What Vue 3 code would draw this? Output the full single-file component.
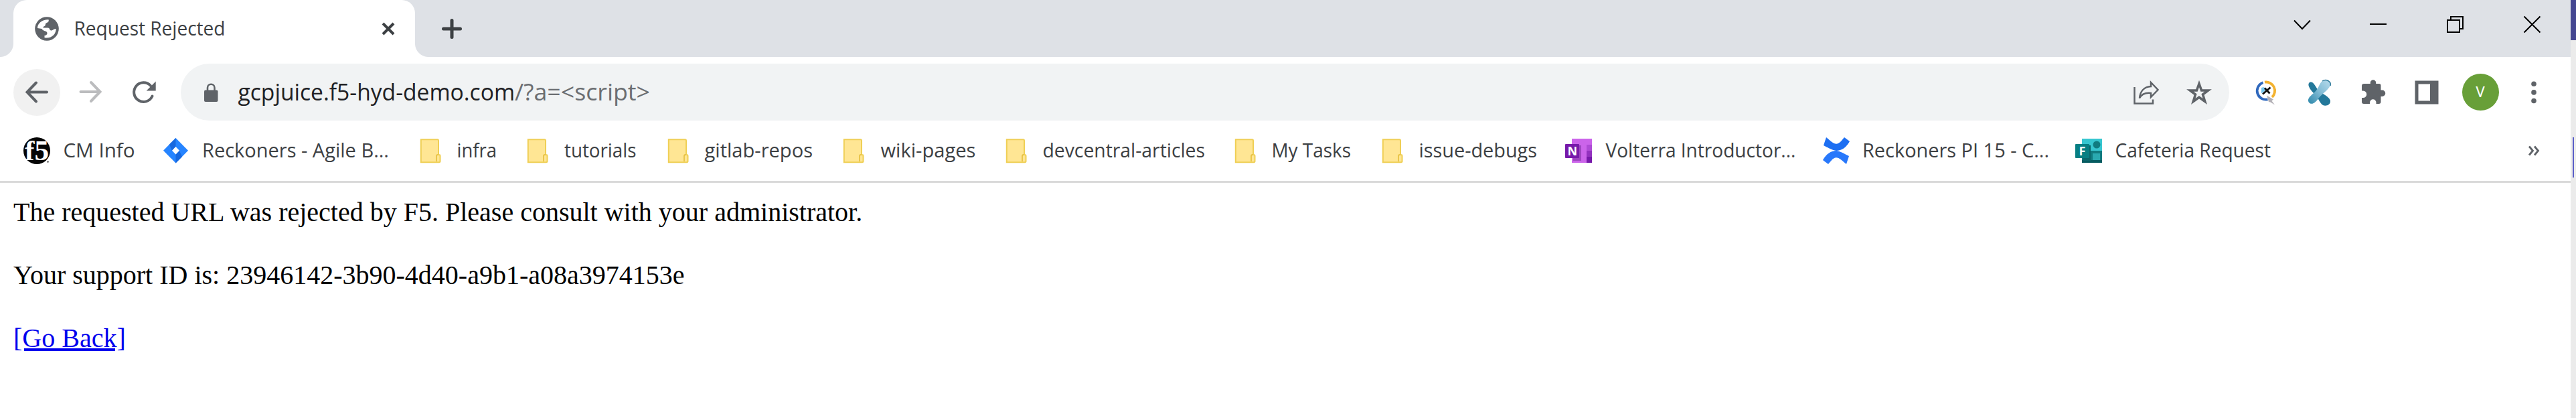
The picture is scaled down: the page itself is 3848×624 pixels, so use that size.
<script setup>
// x: text start inside the label, len: advance width of the text
const bookmarks = [
  { icon: 'f5', text: 'CM Info', width: 207, x: 59.5, len: 107 },
  { icon: 'jira', text: 'Reckoners - Agile B...', width: 381, x: 60, len: 279 },
  { icon: 'folder', text: 'infra', width: 160, x: 59.5, len: 59.5 },
  { icon: 'folder', text: 'tutorials', width: 210, x: 60, len: 107.5 },
  { icon: 'folder', text: 'gitlab-repos', width: 262, x: 59.5, len: 161.5 },
  { icon: 'folder', text: 'wiki-pages', width: 243, x: 60.5, len: 142 },
  { icon: 'folder', text: 'devcentral-articles', width: 342, x: 59.5, len: 242.5 },
  { icon: 'folder', text: 'My Tasks', width: 220, x: 59.5, len: 118.5 },
  { icon: 'folder', text: 'issue-debugs', width: 278, x: 59.5, len: 176.5 },
  { icon: 'onenote', text: 'Volterra Introductor...', width: 385, x: 60.5, len: 284 },
  { icon: 'confluence', text: 'Reckoners PI 15 - C...', width: 377, x: 59, len: 279 },
  { icon: 'forms', text: 'Cafeteria Request', width: 330, x: 59.5, len: 232.5 }
]
</script>

<template>
  <div class="screen">
    <div class="browser">
      <header class="tabs">
        <div class="tab">
          <span class="flare left"></span>
          <svg class="globe" width="36" height="36" viewBox="0 0 36 36">
            <circle cx="18" cy="18" r="17.8" fill="#5f6368" />
            <path d="M4 17C4 10 11 4 20.500 4.300C21.500 7 20 8.500 17 9.500C15 10.500 17 12.500 14.500 14C12 15 12 16 13 16.500H19.500C23 16.500 21.500 20.500 24.500 20.500C27.500 20.500 27.500 18 31.700 18C31.700 26 25 33 14.500 31.200V28C17.500 28 18.500 26 18.500 24.500C18.500 20.500 13 22.500 10.500 18Z" fill="#fff" />
          </svg>
          <svg class="title" width="452" height="60"><text x="0.500" y="38" textLength="226" lengthAdjust="spacingAndGlyphs">Request Rejected</text></svg>
          <svg class="close" width="20" height="20" viewBox="0 0 20 20"><path d="M2 2L18 18M18 2L2 18" stroke="#3c4043" stroke-width="4" /></svg>
          <span class="flare right"></span>
        </div>
        <svg class="plus" width="30" height="30" viewBox="0 0 30 30"><path d="M15 2.500V27.500M2.500 15H27.500" stroke="#3c4043" stroke-width="5" stroke-linecap="round" /></svg>
        <div class="controls">
          <svg width="115" height="85" viewBox="0 0 115 85"><path d="M47 30.500L59 43L71 30.500" /></svg>
          <svg width="115" height="85" viewBox="0 0 115 85"><path d="M45 36H70" /></svg>
          <svg width="115" height="85" viewBox="0 0 115 85"><path d="M46 30H64V48H46ZM51 30V25H69V43H64" /></svg>
          <svg width="115" height="85" viewBox="0 0 115 85"><path d="M45.500 24.500L69.500 48.500M69.500 24.500L45.500 48.500" /></svg>
        </div>
      </header>

      <div class="toolbar">
        <span class="btn active">
          <svg width="70" height="70" viewBox="0 0 70 70"><path d="M50 34.500H21M34 20.500L20.500 34.500L34 48.500" fill="none" stroke="#5f6368" stroke-width="4" stroke-linecap="round" /></svg>
        </span>
        <span class="btn">
          <svg width="70" height="70" viewBox="0 0 70 70"><path d="M20.500 34H49.500M36 20L49.500 34L36 48" fill="none" stroke="#bbbcbe" stroke-width="4" stroke-linecap="round" /></svg>
        </span>
        <span class="btn">
          <svg width="70" height="70" viewBox="0 0 70 70">
            <path d="M47.500 40.500A14.300 14.300 0 1 1 45 25" fill="none" stroke="#5f6368" stroke-width="4" stroke-linecap="round" />
            <path d="M52.700 18.500V32.500H38.700Z" fill="#5f6368" />
          </svg>
        </span>
        <div class="omnibox">
          <svg width="40" height="85" viewBox="0 0 40 85">
            <rect x="10" y="39.500" width="20.500" height="17.500" rx="2" fill="#5f6368" />
            <path d="M15 41V36A5.200 5.200 0 0 1 25.500 36V41" fill="none" stroke="#5f6368" stroke-width="2.600" />
          </svg>
          <svg class="url" width="700" height="85">
            <text x="20.500" y="54.500" textLength="413.500" lengthAdjust="spacingAndGlyphs">gcpjuice.f5-hyd-demo.com</text>
            <text class="path" x="434" y="54.500" textLength="202" lengthAdjust="spacingAndGlyphs">/?a=&lt;script&gt;</text>
          </svg>
          <svg class="share" width="70" height="70" viewBox="0 0 70 70" fill="none" stroke="#5f6368" stroke-width="2.500">
            <path d="M18.500 27V51.500H46V45.500" />
            <path d="M43 20L53.500 31L43 42V36C34 35 29 38 26 43.500C27 33 33 26.500 43 26Z" />
          </svg>
          <svg class="star" width="70" height="70" viewBox="0 0 70 70">
            <path d="M35 22L38.600 32H48.500L40.500 38L43.700 48.500L35 42.300L26.300 48.500L29.500 38L21.500 32H31.400Z" fill="none" stroke="#5f6368" stroke-width="3.600" />
          </svg>
        </div>
        <span class="btn">
          <svg width="70" height="70" viewBox="0 0 70 70">
            <path d="M30.500 20.300A13 13 0 0 0 37.500 45.300" fill="none" stroke="#2f68bd" stroke-width="3.800" />
            <path d="M33 19.700A13 13 0 0 1 44 42" fill="none" stroke="#f3b230" stroke-width="3.800" />
            <path d="M28 28C33 26 34.500 29 33 33L28 36.500Z" fill="#77c7ee" />
            <path d="M33 28.500L40.500 36.500M41.500 27.500L30 37.500" stroke="#111" stroke-width="2.800" />
            <path d="M36 39.500L46 45.500L43.500 47.500L48 53.500L41.500 49.500L39 49Z" fill="#b3b0b6" />
          </svg>
        </span>
        <span class="btn">
          <svg width="70" height="70" viewBox="0 0 70 70">
            <defs>
              <linearGradient id="blade" x1="1" y1="0" x2="0" y2="1"><stop offset="0" stop-color="#b9dced" /><stop offset=".5" stop-color="#7fbad4" /><stop offset="1" stop-color="#2d88ab" /></linearGradient>
            </defs>
            <path d="M20 20C25 18 27 23 31 29C35 36 49 40 51 47C52 54 44 56 40 54C35 51 34 44 28 38C23 33 15 24 20 20Z" fill="#23789a" />
            <path d="M39 18C45 14 53 19 51 25C47 32 40 36 34 43C30 49 24 55 19 50C15 43 24 39 30 32C34 27 35 21 39 18Z" fill="url(#blade)" />
            <path d="M39 18C45 14 53 19 51 25" fill="none" stroke="#357e9d" stroke-width="1.500" />
          </svg>
        </span>
        <span class="btn">
          <svg width="70" height="70" viewBox="0 0 70 70">
            <path d="M21.500 22H30.800V20.500A4.200 4.200 0 0 1 39.200 20.500V22H44Q46.500 22 46.500 24.500V31.500H48.500A4.700 4.700 0 0 1 48.500 41H46.500V49Q46.500 52 43.500 52H39.500V50A4.600 4.600 0 0 0 30 50V52H21Q18 52 18 49V43H20A4.700 4.700 0 0 0 20 32.500H18V25Q18 22 21.500 22Z" fill="#5f6368" />
          </svg>
        </span>
        <span class="btn">
          <svg width="70" height="70" viewBox="0 0 70 70"><path fill-rule="evenodd" d="M17.500 17.500H52.500V52.500H17.500ZM22.500 22.500V47.500H40V22.500Z" fill="#5f6368" /></svg>
        </span>
        <span class="btn"><span class="avatar">V</span></span>
        <span class="btn">
          <svg width="70" height="70" viewBox="0 0 70 70" fill="#5f6368"><circle cx="35" cy="22.300" r="3.800" /><circle cx="35" cy="34.900" r="3.800" /><circle cx="35" cy="47.500" r="3.800" /></svg>
        </span>
      </div>

      <nav class="bookmarks">
        <svg v-for="b in bookmarks" :key="b.text" class="bookmark" :width="b.width" height="90">
          <g transform="translate(0 25)">
            <g v-if="b.icon === 'f5'">
              <circle cx="20" cy="20" r="20" fill="#050505" />
              <text class="logo" x="2" y="34" textLength="36" lengthAdjust="spacingAndGlyphs">f5</text>
              <circle cx="36.500" cy="36.500" r="1.400" fill="#777" />
            </g>
            <g v-else-if="b.icon === 'jira'">
              <path d="M20.500 1L39 19.700L20.500 38.500L2 19.700Z" fill="#2684ff" />
              <path d="M20.500 1V14.500L15 20L11 10.500Z" fill="#1768df" />
              <path d="M20.500 38.500V25L26 20L30 29Z" fill="#1768df" />
              <path d="M20.500 14L26 19.700L20.500 25.500L15 19.700Z" fill="#fff" />
            </g>
            <g v-else-if="b.icon === 'folder'">
              <path d="M5.800 3.300H30.500Q32 3.300 32 5V26H33Q34.500 26 34.500 28V35.500Q34.500 37.200 33 37.200H5.800Z" fill="#ffe694" stroke="#efcf55" stroke-width="2" />
              <path d="M29 36V28Q29 26 31 26H32" fill="none" stroke="#e8c244" stroke-width="1.800" />
            </g>
            <g v-else-if="b.icon === 'onenote'">
              <rect x="10" y="2" width="30" height="36" fill="#cb64ea" />
              <rect x="32" y="11" width="8" height="9" fill="#ae4bd5" />
              <rect x="32" y="20" width="8" height="9" fill="#9332bf" />
              <rect x="32" y="29" width="8" height="9" fill="#7719aa" />
              <rect x="12" y="12" width="12" height="23" fill="#9d46bf" />
              <rect x="0" y="10" width="21" height="21" rx="1" fill="#7719aa" />
              <text class="letter" x="3.500" y="27">N</text>
            </g>
            <g v-else-if="b.icon === 'confluence'">
              <path d="M5 0C12 6 18 12 23 9C27 7 29 3 32 0L40 6C35 15 28 20 20 20C13 19 7 15 1 12Z" fill="#1d6ff2" />
              <path d="M35 40C28 34 22 28 17 31C13 33 11 37 8 40L0 34C5 25 12 20 20 20C27 21 33 25 39 28Z" fill="#2878fb" />
            </g>
            <g v-else>
              <rect x="10" y="2" width="30" height="18" fill="#37c6d0" />
              <rect x="10" y="20" width="30" height="18" fill="#107b80" />
              <rect x="10" y="34" width="30" height="4" fill="#055b60" />
              <circle cx="32" cy="11" r="5.500" fill="#107b80" />
              <rect x="26" y="24" width="11" height="10" fill="#2aa9b0" />
              <rect x="12" y="12" width="11" height="23" fill="#0b666b" />
              <rect x="0" y="10" width="21" height="21" rx="1" fill="#077f83" />
              <text class="letter" x="5.500" y="27">F</text>
            </g>
          </g>
          <text class="label" :x="b.x" y="54.500" :textLength="b.len" lengthAdjust="spacingAndGlyphs">{{ b.text }}</text>
        </svg>
        <svg class="more" width="20" height="20" viewBox="0 0 20 20"><path d="M3 3.500L8.500 10L3 16.500M11 3.500L16.500 10L11 16.500" fill="none" stroke="#5f6368" stroke-width="2.800" /></svg>
      </nav>

      <main class="page">
        The requested URL was rejected by F5. Please consult with your administrator.<br /><br />
        Your support ID is: 23946142-3b90-4d40-a9b1-a08a3974153e<br /><br />
        <a href="#">[Go Back]</a>
      </main>
    </div>
    <aside class="edge"><div class="edge-top"></div><div class="edge-mark"></div></aside>
  </div>
</template>

<style scoped>
.screen { display: flex; width: 3848px; height: 624px; overflow: hidden; background: #fff; }
.browser { width: 3840px; flex: none; }
svg { display: block; flex: none; overflow: visible; }
svg text { font-family: "Open Sans", "Noto Sans", sans-serif; font-size: 29.4px; fill: #3c4043; }
.tabs { display: flex; align-items: flex-start; height: 85px; background: #dee1e6; }
.tab { position: relative; display: flex; box-sizing: border-box; width: 600px; height: 85px; margin-left: 20px; padding-left: 32px; background: #fff; border-radius: 20px 20px 0 0; }
.flare { position: absolute; bottom: 0; width: 20px; height: 20px; }
.flare.left { right: 100%; background: radial-gradient(circle at 0 0, transparent 19.5px, #fff 20.5px); }
.flare.right { left: 100%; background: radial-gradient(circle at 100% 0, transparent 19.5px, #fff 20.5px); }
.globe { margin-top: 25px; }
.title { margin: 14.5px 0 0 22px; }
.close { margin: 32.5px 0 0 8px; }
.plus { margin: 28px 0 0 40px; }
.controls { display: flex; margin-left: auto; }
.controls path { fill: none; stroke: #000; stroke-width: 2; }
.toolbar { display: flex; align-items: center; gap: 10px; height: 95px; padding: 10px 20px 0; box-sizing: border-box; }
.btn { display: flex; align-items: center; justify-content: center; flex: none; width: 70px; height: 70px; border-radius: 50%; }
.active { background: #f1f1f1; }
.omnibox { display: flex; align-items: center; gap: 0; flex: 1; height: 85px; margin: 0 10px; padding: 0 10px 0 25px; box-sizing: border-box; border-radius: 43px; background: #f1f3f4; }
.url text { font-size: 34.5px; fill: #202124; }
.url .path { fill: #6b6e72; }
.share { margin-left: auto; }
.star { margin-left: 10px; }
.avatar { display: flex; align-items: center; justify-content: center; width: 55px; height: 55px; border-radius: 50%; background: #689f38; color: #fff; font: 22px Roboto, sans-serif; }
.bookmarks { display: flex; height: 93px; box-sizing: border-box; padding-left: 35px; border-bottom: 3px solid #dadada; }
.logo { font: bold 42px "Liberation Serif", serif; fill: #fff; }
.letter { font-size: 18px; font-weight: 700; fill: #fff; }
.more { margin: 35px 45px 0 auto; }
.page { padding: 20px; font: 40px/47px "Liberation Serif", "Times New Roman", serif; color: #000; }
.page a { color: #00e; text-decoration: underline; text-decoration-thickness: 4px; }
.edge { width: 8px; background: #ebebeb; }
.edge-top { height: 60px; background: #444791; }
.edge-mark { width: 2px; height: 60px; margin: 145px 0 0 3px; background: #5b5fc7; }
</style>

<style>
body { overflow: hidden; }
</style>
